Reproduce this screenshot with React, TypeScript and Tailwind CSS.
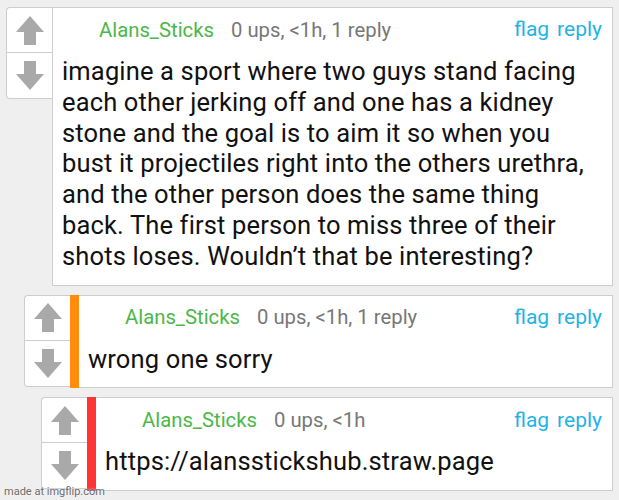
import React from 'react';

interface CommentProps {
  indent: string;
  bar?: string;
  meta: string;
  lines: string[];
}

const Arrow: React.FC<{ down?: boolean }> = ({ down }) => (
  <svg width="28" height="29" viewBox="0 0 28 29" className={down ? 'rotate-180' : ''}>
    <path d="M14 0 L28 16 L20 16 L20 29 L8 29 L8 16 L0 16 Z" fill="#a9a9a9" />
  </svg>
);

const Comment: React.FC<CommentProps> = ({ indent, bar, meta, lines }) => {
  return (
    <div className={`flex ${indent}`}>
      <div className="w-[46px] h-[92px] shrink-0 bg-white border border-r-0 border-[#cdcdcd] rounded-l-[4px] flex flex-col">
        <div className="h-[45px] flex items-center justify-center border-b border-[#cdcdcd]">
          <Arrow />
        </div>
        <div className="flex-1 flex items-center justify-center">
          <Arrow down />
        </div>
      </div>
      {bar && <div className={`w-[9px] shrink-0 ${bar}`} />}
      <div className={`flex-1 bg-white border border-[#cdcdcd] ${bar ? 'border-l-0' : ''} pb-[13px]`}>
        <div className="h-[44px] flex items-center pl-[46px] pr-[10px] text-[20.3px]">
          <span className="text-[#4cb749]">Alans_Sticks</span>
          <span className="ml-[17px] text-[#777777]">{meta}</span>
          <span className="ml-auto text-[#1fb3e6] text-[21px]">flag</span>
          <span className="ml-[8px] text-[#1fb3e6] text-[21px]">reply</span>
        </div>
        <div className="pl-[9px] pt-[4px] text-[25.5px] tracking-[0.15px] leading-[30.8px] text-[#111111]">
          {lines.map((l, i) => (
            <div key={i}>{l}</div>
          ))}
        </div>
      </div>
    </div>
  );
};

export default function App() {
  return (
    <div
      className="relative w-[619px] h-[500px] bg-[#efefef] pt-[7px] pr-[6px] flex flex-col gap-[9px] overflow-hidden"
      style={{ fontFamily: 'Roboto, "Noto Sans", sans-serif' }}
    >
      <Comment
        indent="ml-[6px]"
        meta="0 ups, <1h, 1 reply"
        lines={[
          'imagine a sport where two guys stand facing',
          'each other jerking off and one has a kidney',
          'stone and the goal is to aim it so when you',
          'bust it projectiles right into the others urethra,',
          'and the other person does the same thing',
          'back. The first person to miss three of their',
          'shots loses. Wouldn’t that be interesting?',
        ]}
      />
      <Comment
        indent="ml-[24px]"
        bar="bg-[#ff8c0a]"
        meta="0 ups, <1h, 1 reply"
        lines={['wrong one sorry']}
      />
      <Comment
        indent="ml-[41px]"
        bar="bg-[#ff3434]"
        meta="0 ups, <1h"
        lines={['https://alansstickshub.straw.page']}
      />
      <div
        className="absolute left-[4px] top-[486px] text-[11px] text-[#6a6a6a] leading-none"
        style={{ textShadow: '0 0 2px #fff' }}
      >
        made at imgflip.com
      </div>
    </div>
  );
}
